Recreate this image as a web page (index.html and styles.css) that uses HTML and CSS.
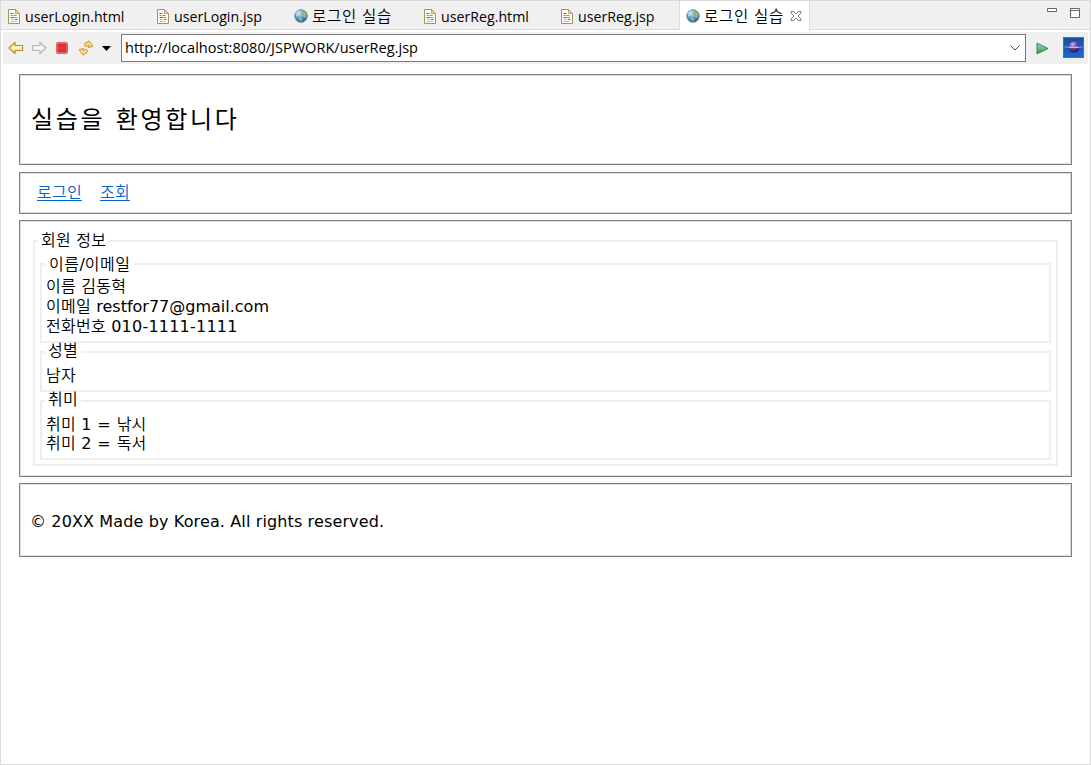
FILE: index.html
```html
<!DOCTYPE html>
<html lang="ko">
<head>
<meta charset="utf-8">
<title>로그인 실습</title>
<link rel="stylesheet" href="styles.css">
</head>
<body>
<svg class="defs" width="0" height="0">
  <defs>
    <linearGradient id="gold" x1="0" y1="0" x2="0" y2="1"><stop offset="0" stop-color="#fffdf0"/><stop offset="1" stop-color="#ffe49a"/></linearGradient>
    <radialGradient id="sea" cx=".4" cy=".3" r=".75"><stop offset="0" stop-color="#b9dcf2"/><stop offset=".55" stop-color="#4b96cb"/><stop offset="1" stop-color="#265481"/></radialGradient>
    <linearGradient id="green" x1="0" y1="0" x2="0" y2="1"><stop offset="0" stop-color="#a9dda0"/><stop offset="1" stop-color="#2f9b58"/></linearGradient>
    <linearGradient id="space" x1="0" y1="0" x2="0" y2="1"><stop offset="0" stop-color="#1a4ca4"/><stop offset="1" stop-color="#1f66d2"/></linearGradient>
    <radialGradient id="planet" cx=".4" cy=".25" r=".75"><stop offset="0" stop-color="#cbb6e4"/><stop offset=".45" stop-color="#6e50a0"/><stop offset="1" stop-color="#24145c"/></radialGradient>
    <symbol id="doc" viewBox="0 0 12 15">
      <path d="M.5.5h7l4 4v10H.5z" fill="#fffef4" stroke="#a8935c"/>
      <path d="M7.5.5v4h4z" fill="#eed28a" stroke="#b99b55" stroke-width=".8"/>
      <path d="M2.5 4.5h3M2.5 8.5h4M7 10.5h2.5" stroke="#4c70b2"/>
      <path d="M2.5 6.5h2M5.500 6.500h3M7 8.5h2" stroke="#c86a76"/>
      <path d="M2.500 10.500h3.500M2.500 12.500h6" stroke="#8fa9c4" stroke-width=".7"/>
    </symbol>
    <symbol id="globe" viewBox="0 0 14 14">
      <circle cx="7" cy="7" r="6.400" fill="url(#sea)"/>
      <path d="M1.200 4.500Q3 1.300 6 1.200L7 3 5.500 4.500 4.500 7 2.500 7.500z" fill="#c9e6ef" opacity=".65"/>
      <path d="M8 1.500Q12 2.500 12.800 6L11.500 9 9.500 8 8.200 5 6.800 3.800zM4.500 7.800L8 9.200 7.400 12.600Q4.800 11.500 4.500 7.800z" fill="#b0ad68"/>
      <circle cx="7" cy="7" r="6.300" fill="none" stroke="#4f86a8" stroke-width=".6"/>
    </symbol>
  </defs>
</svg>
<div class="window">
  <div class="tabs">
    <div class="tab tab-wide"><svg class="doc"><use href="#doc"/></svg><span>userLogin.html</span></div>
    <div class="tab"><svg class="doc"><use href="#doc"/></svg><span>userLogin.jsp</span></div>
    <div class="tab tab-globe"><svg class="globe"><use href="#globe"/></svg><span class="kr">로그인 실습</span></div>
    <div class="tab"><svg class="doc"><use href="#doc"/></svg><span>userReg.html</span></div>
    <div class="tab tab-last"><svg class="doc"><use href="#doc"/></svg><span>userReg.jsp</span></div>
    <div class="tab active"><svg class="globe"><use href="#globe"/></svg><span class="kr">로그인 실습</span>
      <svg class="close" viewBox="0 0 12 12"><path d="M1 1.500h2.500L6 4l2.500-2.500H11V3L8 6l3 3v1.500H8.500L6 8l-2.500 2.500H1V9l3-3-3-3z" fill="#fff" stroke="#6a6a6a" stroke-width=".9"/></svg>
    </div>
    <div class="controls">
      <svg width="10" height="4"><path d="M.5.5h9v3h-9z" fill="#fff" stroke="#666"/></svg>
      <svg width="10" height="10"><path d="M.5.5h9v9h-9zM.5 2.500h9" fill="#fff" stroke="#666"/></svg>
    </div>
  </div>
  <div class="toolbar">
    <div class="actions">
      <svg width="16" height="14"><path d="M1 7L7 1.500V4.500H14.500V9.500H7V12.500z" fill="url(#gold)" stroke="#c08a20" stroke-width="1.200" stroke-linejoin="round"/></svg>
      <svg width="16" height="14"><path d="M15 7L9 1.500V4.500H1.500V9.500H9V12.500z" fill="#f5f5f5" stroke="#b6b6b6" stroke-width="1.200" stroke-linejoin="round"/></svg>
      <svg class="stop" width="12" height="12"><rect x=".5" y=".5" width="11" height="11" rx="1" fill="#ee8584" stroke="#dc6468"/><rect x="2" y="2" width="8" height="8" fill="#e0343c" stroke="#c91826" stroke-width=".6"/></svg>
      <svg class="sync" width="16" height="16"><g fill="#fbdc8a" stroke="#c8912f" stroke-width=".9" stroke-linejoin="round"><path d="M6.200 5.500Q6.500 2 10.200 2L10.200.8 12.500 2.500 14.800 6.500 10.200 7.500 11 5.500Q9 4.600 8.300 6.800z"/><path d="M9.800 10.500Q9.500 14 5.800 14L5.800 15.200 3.500 13.500 1.200 9.500 5.800 8.500 5 10.500Q7 11.400 7.700 9.200z"/></g></svg>
      <svg class="drop" width="9" height="5"><path d="M0 0h9L4.500 5z" fill="#000"/></svg>
    </div>
    <div class="address"><span>http://localhost:8080/JSPWORK/userReg.jsp</span><svg width="10" height="6"><path d="M.5.5L5 5 9.500.5" fill="none" stroke="#444"/></svg></div>
    <svg class="go" width="13" height="13"><path d="M1 1.200L12 6.500 1 11.800z" fill="url(#green)" stroke="#278451" stroke-linejoin="round"/></svg>
    <svg class="browser" width="21" height="21"><rect width="21" height="21" fill="url(#space)"/><path d="M.5.500h20v20H.5z" fill="none" stroke="#2b76d2"/><circle cx="11" cy="10" r="5.500" fill="url(#planet)"/><path d="M1.500 10h18" stroke="#8f9fe6"/><path d="M6 10.500h10" stroke="#d8cdf2" stroke-width=".8"/></svg>
  </div>
  <main class="page">
    <header class="box header"><h1>실습을 환영합니다</h1></header>
    <nav class="box nav"><a href="#">로그인</a><a href="#">조회</a></nav>
    <section class="box section">
      <fieldset class="outer">
        <legend>회원 정보</legend>
        <fieldset class="contact"><legend>이름<span class="latin">/</span>이메일</legend>
          <div>이름 김동혁</div><div>이메일 <span class="latin">restfor77@gmail.com</span></div><div>전화번호 <span class="latin phone">010-1111-1111</span></div>
        </fieldset>
        <fieldset class="gender"><legend>성별</legend><div>남자</div></fieldset>
        <fieldset class="hobby"><legend>취미</legend><div class="row">취미 <span class="latin">1 = </span>낚시</div><div class="row">취미 <span class="latin">2 = </span>독서</div></fieldset>
      </fieldset>
    </section>
    <footer class="box footer">© 20XX Made by Korea. All rights reserved.</footer>
  </main>
</div>
</body>
</html>
```
FILE: styles.css
```css
* { box-sizing: border-box; }
body { margin: 0; background: #fff; color: #000; font: 16px/20px "DejaVu Sans", "Noto Sans CJK KR", sans-serif; }
svg { display: block; flex: none; }
.defs { height: 0; }
.window { height: 765px; border: 1px solid #dadada; overflow: hidden; }

.tabs { display: flex; height: 29px; background: #f0f0f0; border-bottom: 1px solid #dcdcdc; font: 14.2px/20px "Open Sans", "Noto Sans CJK KR", sans-serif; }
.tab { display: flex; align-items: center; width: 137px; padding: 2px 0 0 7px; gap: 5px; white-space: nowrap; flex: none; }
.tab span { padding-top: 1px; }
.tab .kr { padding-top: 0; }
.tab-wide { width: 149px; }
.tab-globe { width: 130px; }
.tab-globe, .tab.active { gap: 4px; }
.tab-last { width: 125px; }
.tab.active { width: 131px; height: 29px; background: #fff; border: solid #dcdcdc; border-width: 0 1px; padding: 1px 0 0 6px; }
.kr { font-size: 15.5px; font-weight: 350; letter-spacing: .8px; }
.doc { width: 12px; height: 15px; }
.globe { width: 14px; height: 14px; }
.close { width: 12px; height: 12px; margin-left: 2px; }
.controls { display: flex; gap: 13px; margin-left: auto; padding: 7px 10px 0 0; }

.toolbar { display: flex; align-items: center; height: 32px; margin: 2px 2px 0; background: #f0f0f0; }
.actions { display: flex; align-items: center; width: 118px; padding-left: 5px; gap: 7px; }
.stop { margin-left: 2px; }
.sync { margin-left: 3px; }
.drop { margin-left: 1px; }
.address { display: flex; align-items: center; justify-content: space-between; width: 905px; height: 28px; padding: 0 5px 0 3px; border: 1px solid #7a7a7a; background: #fff; font: 14.55px/20px "Open Sans", sans-serif; }
.address span { margin-top: -2px; }
.go { margin-left: 10px; }
.browser { margin: -1px 0 0 14px; }

.page { padding: 10px 18px; font-weight: 350; }
.latin { font-weight: 400; }
.box { border: 1px solid #808080; box-shadow: inset 0 0 0 1px #dedede; background: #fff; }
.header { display: flex; align-items: center; height: 91px; padding-left: 11px; }
h1 { margin: 0; font-size: 24px; line-height: 32px; font-weight: 400; letter-spacing: 2.7px; }
.nav { display: flex; align-items: center; gap: 18px; height: 42px; margin-top: 7px; padding-left: 17px; letter-spacing: .25px; }
.nav a { color: #0066cc; text-underline-offset: 2px; text-decoration-thickness: 1px; }
.section { height: 257px; margin-top: 6px; padding: 10px 13px 0; letter-spacing: .25px; }
.section .latin { letter-spacing: 0; }
.section .phone { letter-spacing: .22px; }
fieldset { margin: 0; min-width: 0; border: 2px solid #eee; padding: 0 0 0 4px; }
legend { height: 20px; margin: 0; padding: 0 3px; }
.outer { height: 235px; padding: 3px 5px 0; }
.outer > legend { margin-left: -2px; }
.contact { height: 89px; padding-top: 3px; }
.contact > legend, .gender > legend, .hobby > legend { margin-left: -1px; }
.contact > legend { padding-left: 4px; line-height: 21px; letter-spacing: .5px; }
.gender > legend, .hobby > legend { line-height: 18px; }
.gender { height: 50px; margin-top: -1px; padding-top: 4px; }
.hobby { height: 69px; margin-top: -1px; padding-top: 4px; }
.row { height: 19px; line-height: 19px; }
.section .hobby .latin { letter-spacing: .4px; }
.footer { height: 74px; margin-top: 6px; padding: 28px 0 0 10px; font-weight: 400; letter-spacing: .13px; }
```
